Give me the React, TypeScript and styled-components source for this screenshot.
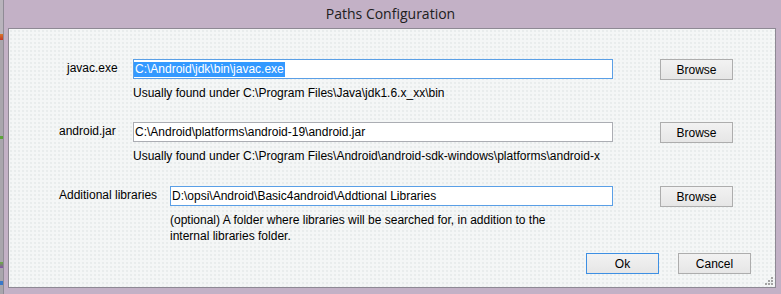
import React from 'react'
import styled, { createGlobalStyle } from 'styled-components'

const GlobalStyle = createGlobalStyle`
  html, body {
    margin: 0;
    padding: 0;
  }
  body {
    background: #c3b1c6;
  }
`
const Window = styled.div`
  width: 781px;
  height: 294px;
  display: flex;
  background: #c3b1c6;
  overflow: hidden;
  font-family: 'Liberation Sans', Arial, sans-serif;
  font-size: 12px;
  color: #000;
`
// sliver of another window peeking at the left edge
const EdgeStrip = styled.div`
  width: 3px;
  flex-shrink: 0;
  background: linear-gradient(
    to bottom,
    #b9b4bc 0px,
    #b9b4bc 34px,
    #d9782a 34px,
    #c0392b 40px,
    #a9a6ad 40px,
    #a9a6ad 136px,
    #5da33a 136px,
    #5da33a 139px,
    #a9a6ad 139px,
    #a9a6ad 262px,
    #6bb03f 262px,
    #8a4fb0 268px,
    #a9a6ad 268px,
    #a9a6ad 281px,
    #3a78c9 281px,
    #3a78c9 285px,
    #a9a6ad 285px
  );
  border-right: 1px solid #8f8b95;
`
const Frame = styled.div`
  flex: 1;
  display: flex;
  flex-direction: column;
`
const TitleBar = styled.div`
  height: 28px;
  display: flex;
  align-items: center;
  justify-content: center;
  padding-right: 4px;
  padding-bottom: 1px;
  box-sizing: border-box;
  font-family: 'Open Sans', 'Noto Sans', sans-serif;
  font-size: 14px;
  color: #202020;
`
const Client = styled.div`
  position: relative;
  flex: 1;
  margin: 0 5px 6px 4px;
  border: 1px solid #8e8994;
  background-color: #f4f6f6;
  background-image: radial-gradient(#e8ecec 0.7px, transparent 0.8px);
  background-size: 4px 4px;
  padding-top: 30px;
  display: flex;
  flex-direction: column;
  gap: 21px;
`
const Row = styled.div<{ $gapFix?: number }>`
  display: flex;
  align-items: flex-start;
  margin-top: ${(p) => p.$gapFix ?? 0}px;
`
const Label = styled.div<{ $indent: number; $width: number }>`
  width: ${(p) => p.$width}px;
  padding-left: ${(p) => p.$indent}px;
  box-sizing: border-box;
  line-height: 18px;
  white-space: nowrap;
`
const Field = styled.div<{ $width: number }>`
  width: ${(p) => p.$width}px;
  display: flex;
  flex-direction: column;
`
const TextBox = styled.div<{ $focused?: boolean }>`
  height: 20px;
  box-sizing: border-box;
  border: 1px solid ${(p) => (p.$focused ? '#5a9fe6' : '#abadb3')};
  background: #fff;
  display: flex;
  align-items: center;
  white-space: nowrap;
  overflow: hidden;
`
const Value = styled.span<{ $selected?: boolean }>`
  padding: 0 1px;
  line-height: 15px;
  background: ${(p) => (p.$selected ? '#3399ff' : 'transparent')};
  color: ${(p) => (p.$selected ? '#fff' : '#000')};
`
const Hint = styled.div`
  line-height: 16px;
  &:nth-child(2) {
    margin-top: 6px;
  }
`
const Button = styled.button<{ $default?: boolean }>`
  width: 73px;
  height: 21px;
  margin: 0;
  padding: 0;
  box-sizing: border-box;
  border: 1px solid ${(p) => (p.$default ? '#3d8fe3' : '#adadad')};
  border-radius: 0;
  background: linear-gradient(to bottom, #f2f2f2, #e6e6e6);
  font-family: 'Liberation Sans', Arial, sans-serif;
  font-size: 12px;
  color: #000;
`
const BrowseCell = styled.div`
  margin-left: 47px;
`
const Footer = styled.div`
  display: flex;
  justify-content: flex-end;
  gap: 19px;
  padding-right: 24px;
  margin-top: -12px;
`
const Grip = styled.svg`
  position: absolute;
  right: 2px;
  bottom: 2px;
`

type PathRow = {
  label: string
  indent: number
  start: number
  value: string
  hint: string[]
  focused?: boolean
  selected?: boolean
  gapFix?: number
}

const rows: PathRow[] = [
  {
    label: 'javac.exe',
    indent: 58,
    start: 124,
    value: 'C:\\Android\\jdk\\bin\\javac.exe',
    hint: ['Usually found under C:\\Program Files\\Java\\jdk1.6.x_xx\\bin'],
    focused: true,
    selected: true,
  },
  {
    label: 'android.jar',
    indent: 50,
    start: 124,
    value: 'C:\\Android\\platforms\\android-19\\android.jar',
    hint: ['Usually found under C:\\Program Files\\Android\\android-sdk-windows\\platforms\\android-x'],
  },
  {
    label: 'Additional libraries',
    indent: 50,
    start: 161,
    value: 'D:\\opsi\\Android\\Basic4android\\Addtional Libraries',
    hint: [
      '(optional) A folder where libraries will be searched for, in addition to the',
      'internal libraries folder.',
    ],
    focused: true,
    gapFix: 1,
  },
]

const GripDots = () => {
  const dots: [number, number][] = [
    [6, 0],
    [3, 3],
    [6, 3],
    [0, 6],
    [3, 6],
    [6, 6],
  ]
  return (
    <Grip width="8" height="8" viewBox="0 0 8 8">
      {dots.map(([x, y]) => (
        <rect key={`${x}-${y}`} x={x} y={y} width="2" height="2" fill="#a3a3a3" />
      ))}
    </Grip>
  )
}

const App = () => {
  return (
    <>
      <GlobalStyle />
      <Window>
        <EdgeStrip />
        <Frame>
          <TitleBar>Paths Configuration</TitleBar>
          <Client>
            {rows.map((row) => (
              <Row key={row.label} $gapFix={row.gapFix}>
                <Label $indent={row.indent} $width={row.start}>
                  {row.label}
                </Label>
                <Field $width={604 - row.start}>
                  <TextBox $focused={row.focused}>
                    <Value $selected={row.selected}>{row.value}</Value>
                  </TextBox>
                  {row.hint.map((line) => (
                    <Hint key={line}>{line}</Hint>
                  ))}
                </Field>
                <BrowseCell>
                  <Button>Browse</Button>
                </BrowseCell>
              </Row>
            ))}
            <Footer>
              <Button $default>Ok</Button>
              <Button>Cancel</Button>
            </Footer>
            <GripDots />
          </Client>
        </Frame>
      </Window>
    </>
  )
}

export default App
